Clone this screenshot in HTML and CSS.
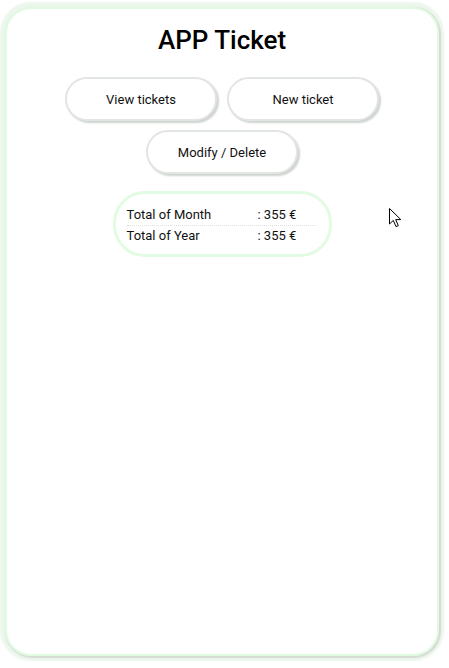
FILE: index.html
```html
<!DOCTYPE html>
<html>
<head>
<meta charset="utf-8">
<link rel="stylesheet" href="styles.css">
</head>
<body>
<div class="app">
  <h1 class="title">APP Ticket</h1>
  <div class="actions">
    <div class="row">
      <button class="btn">View tickets</button>
      <button class="btn">New ticket</button>
    </div>
    <div class="row">
      <button class="btn">Modify / Delete</button>
    </div>
  </div>
  <div class="totals">
    <div class="trow first"><span class="label">Total of Month</span><span class="value">: 355 €</span></div>
    <div class="trow"><span class="label">Total of Year</span><span class="value">: 355 €</span></div>
  </div>
  <svg class="cursor" width="13" height="20" viewBox="0 0 13 20"><path d="M0.5 0.5 L0.5 16 L4.3 12.4 L7 18.6 L9.3 17.6 L6.7 11.6 L11.8 11.6 Z" fill="#fff" stroke="#000" stroke-width="1" stroke-linejoin="miter"/></svg>
</div>
</body>
</html>
```
FILE: styles.css
```css
html, body {
  margin: 0;
  padding: 0;
  background: #fff;
}
body {
  font-family: Roboto, "Liberation Sans", sans-serif;
  color: #000;
  min-height: 668px;
  padding-top: 7px;
  box-sizing: border-box;
}
.app {
  position: relative;
  box-sizing: border-box;
  margin: 0 10px 12px 5px;
  width: 434px;
  height: 649px;
  border: 2px solid #e0fbe0;
  border-radius: 26px;
  box-shadow: 1px 1px 1px 1px #d6dbd6, 0 0 2px 5px #edf6ed;
  background: #fff;
}
.title {
  margin: 0;
  padding-top: 16px;
  font-size: 26px;
  line-height: 30px;
  font-weight: 500;
  text-align: center;
  color: #000;
}
.actions {
  margin-top: 22px;
  display: flex;
  flex-direction: column;
  align-items: center;
  gap: 9px;
}
.row {
  display: flex;
  gap: 10px;
  justify-content: center;
}
.btn {
  box-sizing: border-box;
  width: 152px;
  height: 44px;
  border: 2px solid #e2e6e2;
  border-radius: 22px;
  background: #fff;
  box-shadow: 2px 2px 2px #cfd3cf;
  font-family: Roboto, "Liberation Sans", sans-serif;
  font-size: 13px;
  color: #111;
  padding: 0;
}
.totals {
  box-sizing: border-box;
  width: 219px;
  margin: 17px auto 0;
  padding: 12px 12px 9px 11px;
  border: 3px solid #e2fbe2;
  border-radius: 32px;
  font-size: 13px;
  color: #111;
}
.trow {
  display: flex;
  line-height: 18px;
}
.trow.first {
  padding-bottom: 1px;
  border-bottom: 1px dotted #e0e0e0;
}
.trow + .trow {
  padding-top: 1px;
}
.label {
  width: 131px;
}
.cursor {
  position: absolute;
  left: 382px;
  top: 199px;
}
```
